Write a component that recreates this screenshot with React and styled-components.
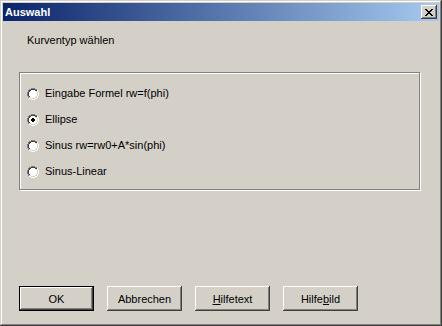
import React from 'react';
import styled, {createGlobalStyle} from 'styled-components';

const Global = createGlobalStyle`
    html, body {
        margin: 0;
        padding: 0;
        background: #d4d0c8;
    }
    body {
        font-family: "Liberation Sans", Arial, sans-serif;
        font-size: 11px;
        color: #000;
    }
`;

const Window = styled.div`
    width: 442px;
    height: 326px;
    box-sizing: border-box;
    padding: 3px;
    background: #d4d0c8;
    display: flex;
    flex-direction: column;
    box-shadow: inset -1px -1px #404040, inset 1px 1px #d4d0c8,
                inset -2px -2px #808080, inset 2px 2px #ffffff;
`;

const TitleBar = styled.div`
    height: 18px;
    flex: none;
    display: flex;
    align-items: center;
    justify-content: space-between;
    padding: 0 2px 0 2px;
    background: linear-gradient(to right, #0a246a, #a6caf0);
`;

const Title = styled.span`
    color: #fff;
    font-weight: bold;
    font-size: 11px;
    line-height: 13px;
`;

const CloseButton = styled.div`
    width: 16px;
    height: 14px;
    box-sizing: border-box;
    background: #d4d0c8;
    display: flex;
    align-items: center;
    justify-content: center;
    box-shadow: inset -1px -1px #404040, inset 1px 1px #ffffff,
                inset -2px -2px #808080, inset 2px 2px #d4d0c8;
`;

const Body = styled.div`
    flex: 1;
    display: flex;
    flex-direction: column;
    padding: 0 16px 12px 16px;
`;

const Label = styled.div`
    margin-top: 13px;
    padding-left: 8px;
    line-height: 13px;
`;

const GroupBox = styled.div`
    margin-top: 25px;
    width: 401px;
    height: 118px;
    box-sizing: border-box;
    border: 1px solid #808080;
    box-shadow: inset 1px 1px #fff, 1px 1px #fff;
    display: flex;
    flex-direction: column;
    padding: 14px 0 0 7px;
    gap: 13px;
`;

const RadioRow = styled.label`
    display: flex;
    align-items: center;
    gap: 6px;
    height: 13px;
    line-height: 13px;
`;

const ButtonRow = styled.div`
    margin-top: auto;
    display: flex;
    gap: 13px;
`;

const Button = styled.div`
    width: 75px;
    height: 25px;
    box-sizing: border-box;
    display: flex;
    align-items: center;
    justify-content: center;
    background: #d4d0c8;
    box-shadow: ${p => p.$default
        ? 'inset 0 0 0 1px #000, inset -2px -2px #404040, inset 2px 2px #ffffff, inset -3px -3px #808080'
        : 'inset -1px -1px #404040, inset 1px 1px #ffffff, inset -2px -2px #808080, inset 2px 2px #d4d0c8'};
    u {
        text-decoration: underline;
    }
`;

const Radio = ({checked}) => (
    <svg width="12" height="12" viewBox="0 0 12 12" shapeRendering="crispEdges">
        <path d="M4 0h4v1H4zM2 1h2v1H2zM8 1h2v1H8zM1 2h1v2H1zM0 4h1v4H0zM1 8h1v2H1z" fill="#808080"/>
        <path d="M4 1h4v1H4zM2 2h2v1H2zM8 2h2v1H8zM2 3h1v1H2zM1 4h1v4H1zM2 8h1v1H2z" fill="#404040"/>
        <path d="M10 2h1v2h-1zM11 4h1v4h-1zM10 8h1v2h-1zM8 10h2v1H8zM2 10h2v1H2zM4 11h4v1H4z" fill="#ffffff"/>
        <path d="M9 3h1v1H9zM10 4h1v4h-1zM9 8h1v1H9zM8 9h2v1H8zM2 9h2v1H2zM4 10h4v1H4z" fill="#d4d0c8"/>
        <path d="M4 2h4v1H4zM3 3h6v1H3zM2 4h8v4H2zM3 8h6v1H3zM4 9h4v1H4z" fill="#ffffff"/>
        {checked && <path d="M5 4h2v1H5zM4 5h4v2H4zM5 7h2v1H5z" fill="#000"/>}
    </svg>
);

const CloseIcon = () => (
    <svg width="8" height="7" viewBox="0 0 8 7" shapeRendering="crispEdges">
        <path d="M0 0h2v1h1v1h2V1h1V0h2v1H7v1H6v1H5v1h1v1h1v1h1v1H6V6H5V5H3v1H2v1H0V6h1V5h1V4h1V3H2V2H1V1H0z" fill="#000"/>
    </svg>
);

const options = [
    'Eingabe Formel rw=f(phi)',
    'Ellipse',
    'Sinus rw=rw0+A*sin(phi)',
    'Sinus-Linear',
];

const App = () => {
    return (
        <Window>
            <Global/>
            <TitleBar>
                <Title>Auswahl</Title>
                <CloseButton><CloseIcon/></CloseButton>
            </TitleBar>
            <Body>
                <Label>Kurventyp wählen</Label>
                <GroupBox>
                    {options.map((text, i) => (
                        <RadioRow key={text}>
                            <Radio checked={i === 1}/>
                            <span>{text}</span>
                        </RadioRow>
                    ))}
                </GroupBox>
                <ButtonRow>
                    <Button $default>OK</Button>
                    <Button>Abbrechen</Button>
                    <Button><span><u>H</u>ilfetext</span></Button>
                    <Button><span>Hilfe<u>b</u>ild</span></Button>
                </ButtonRow>
            </Body>
        </Window>
    );
};

export default App;
